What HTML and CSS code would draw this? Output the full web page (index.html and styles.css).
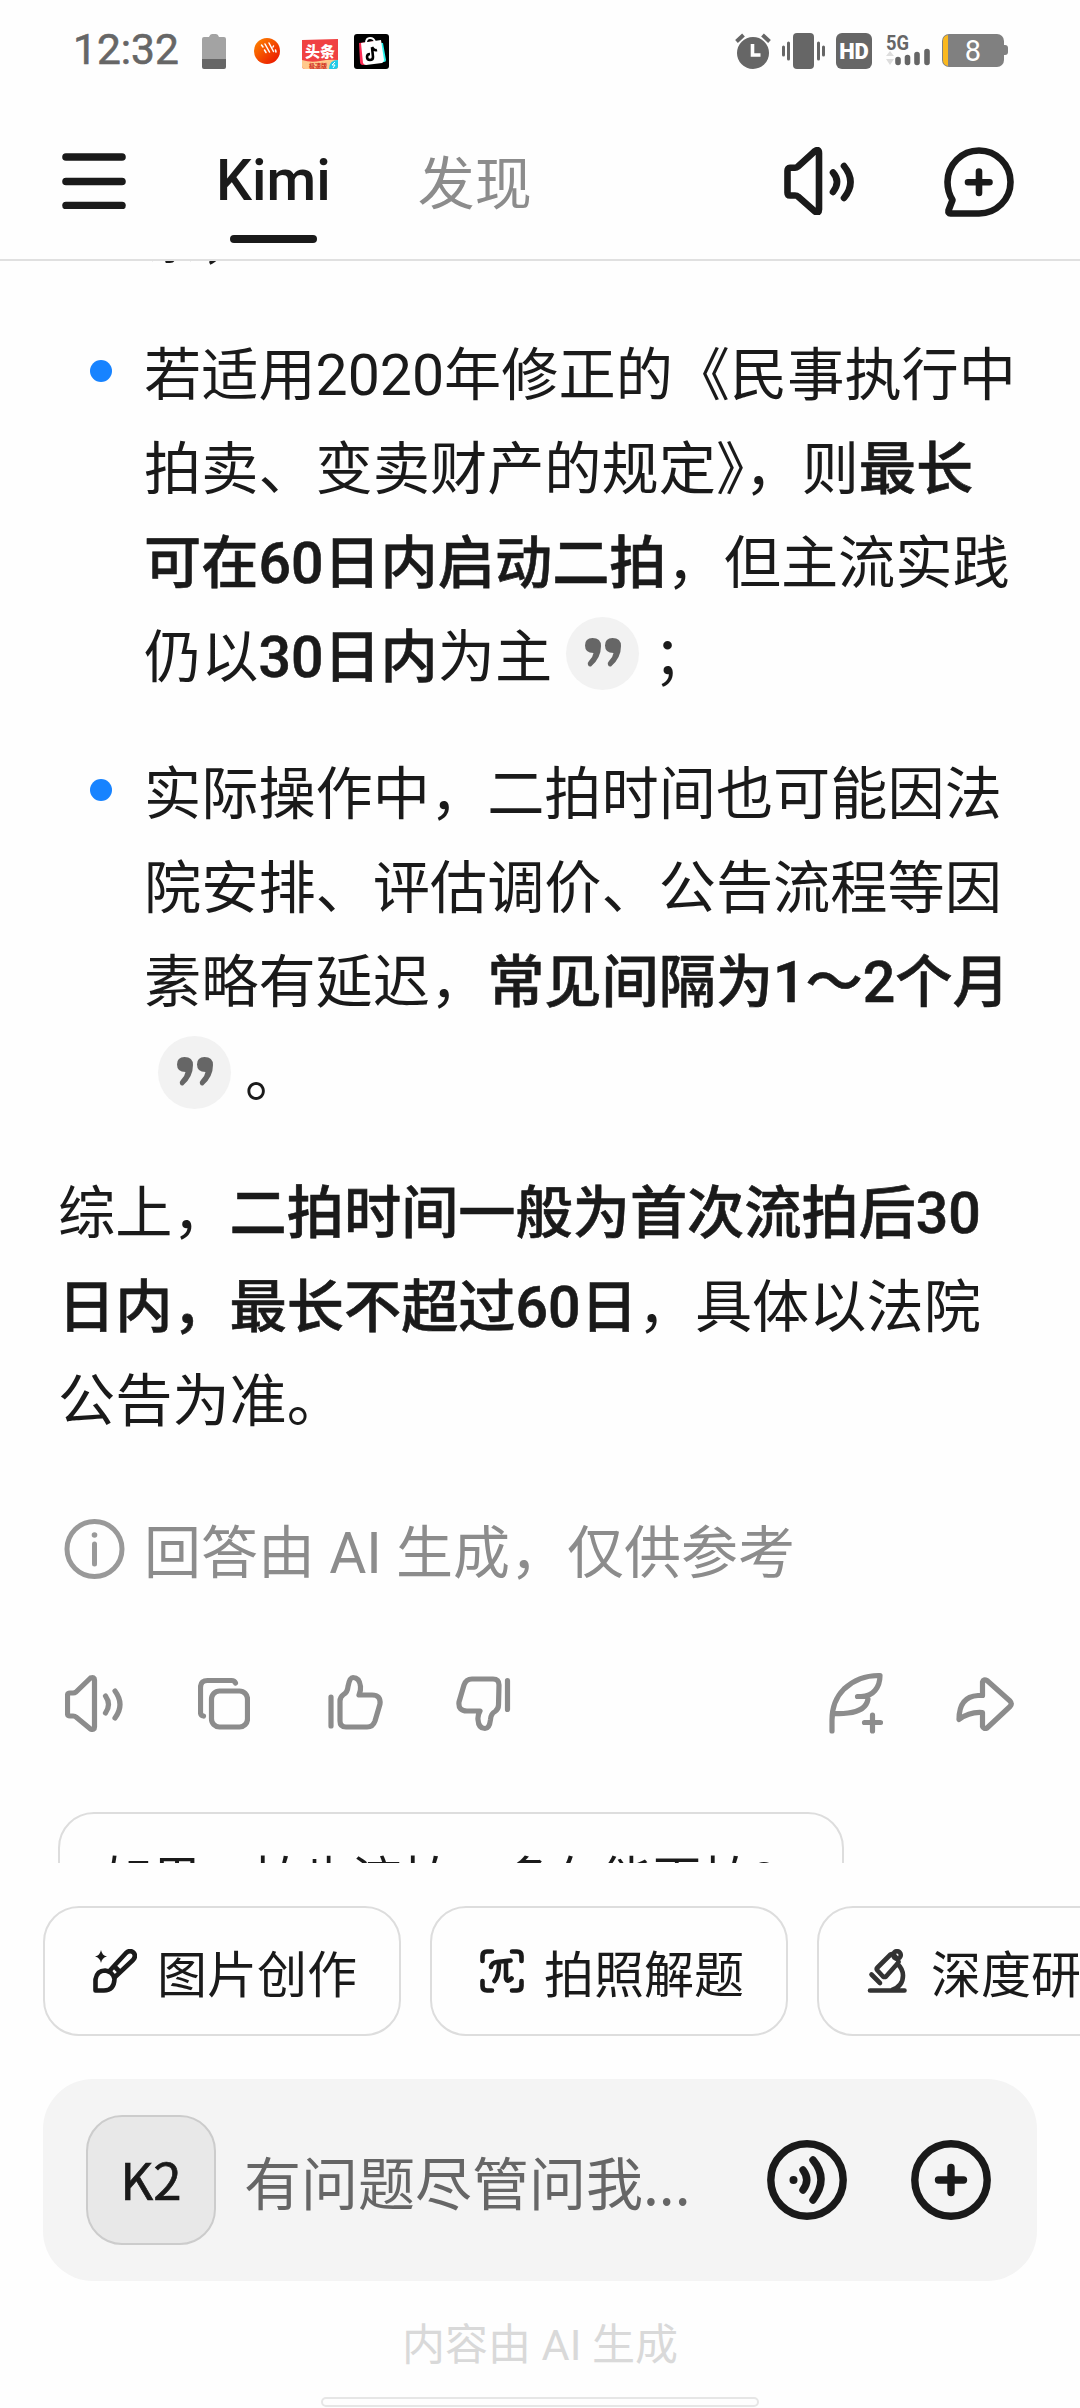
FILE: index.html
```html
<!DOCTYPE html>
<html lang="zh-CN">
<head>
    <meta charset="UTF-8">
    <meta name="viewport" content="width=device-width, initial-scale=1.0">
    <title>Kimi</title>
    <link rel="stylesheet" href="styles.css">
</head>
<body>
    <div class="status-bar">
        <span class="time">12:32</span>
        <svg class="app-battery" width="24" height="35" viewBox="0 0 24 35">
            <path d="M2 3h5q1-3 3-3h4q2 0 3 3h5q2 0 2 2v20H0V5q0-2 2-2z" fill="#a3a3a3"/>
            <path d="M0 25h24v8q0 2-2 2H2q-2 0-2-2z" fill="#666"/>
        </svg>
        <svg class="app-orange" width="26" height="26" viewBox="0 0 26 26">
            <defs>
                <linearGradient id="orange" x1="0" y1="0" x2="1" y2="1">
                    <stop offset="0" stop-color="#ff8a00"/>
                    <stop offset="1" stop-color="#e80c00"/>
                </linearGradient>
            </defs>
            <circle cx="13" cy="13" r="13" fill="url(#orange)"/>
            <path d="M7.500 7l1.500 2M11 6l4.500 8M10.500 12l1.500 2.500M15 5l4.500 8.500M19.500 8l-.5 1M21.500 12l.5 2" stroke="#fff" stroke-width="1.500" stroke-linecap="round" fill="none"/>
        </svg>
        <svg class="app-news" width="36" height="30" viewBox="0 0 36 30">
            <path d="M0 1L36 0v27q0 3-3 3H3q-3 0-3-3z" fill="#f04142"/>
            <path d="M0 21q9 3 18 1t18-1v6q0 3-3 3H3q-3 0-3-3z" fill="#ffc98c"/>
            <text x="18" y="17.500" font-size="15" font-weight="900" fill="#fff" text-anchor="middle">头条</text>
            <text x="16" y="29" font-size="6" font-weight="900" fill="#d33a2c" text-anchor="middle">极速版</text>
            <path d="M27 30q0-9 9-9v6q0 3-3 3z" fill="#22cbe8"/>
            <path d="M33 23l-3 3h3l-2 3" stroke="#fff" fill="none"/>
        </svg>
        <svg class="app-shop" width="35" height="35" viewBox="0 0 35 35">
            <rect width="35" height="35" rx="3" fill="#000"/>
            <path d="M5 9l18-2 3 21-17 3q-3 0-3-3z" fill="#fe2c55"/>
            <path d="M12 8l17 1 3 17q0 2-2 2l-18 2z" fill="#25f4ee"/>
            <path d="M7 9l20-3 3 20q0 2-2 3l-16 2q-2 0-3-2z" fill="#fff"/>
            <path d="M12 9q0-5 4-5t5 4" stroke="#fff" stroke-width="2" fill="none"/>
            <path d="M18 13l1 10q0 3-3 3t-3-3q0-3 3-3M18 13q2 4 5 3" stroke="#000" stroke-width="2.6" fill="none"/>
        </svg>
        <div class="status-icons">
            <svg width="36" height="36" viewBox="0 0 36 36">
                <circle cx="18" cy="20" r="16" fill="#666"/>
                <path d="M1.500 8.500l7-6.500M34.500 8.500l-7-6.500" stroke="#666" stroke-width="4"/>
                <path d="M17.500 11v11h8" stroke="#fff" stroke-width="3.600" fill="none"/>
            </svg>
            <svg width="43" height="36" viewBox="0 0 43 36">
                <rect x="11" width="21" height="36" rx="4" fill="#666"/>
                <path d="M1.500 14v8M6.500 10v16M36.500 10v16M41.500 14v8" stroke="#666" stroke-width="3" stroke-linecap="round"/>
            </svg>
            <svg width="36" height="36" viewBox="0 0 36 36">
                <rect width="36" height="36" rx="6" fill="#666"/>
                <text class="hd" x="18" y="26" text-anchor="middle">HD</text>
            </svg>
            <svg class="signal" width="45" height="36" viewBox="0 0 45 36">
                <text class="five-g" x="0" y="17" textLength="23" lengthAdjust="spacingAndGlyphs">5G</text>
                <path d="M0 23l4-5 4 5zM0 26h8l-4 6z" fill="#ddd"/>
                <path d="M12 26.500v3M21.500 24.500v5M31 21.500v8M41 18.500v11" stroke="#666" stroke-width="5.600" stroke-linecap="round"/>
            </svg>
            <svg class="battery" width="66" height="34" viewBox="0 0 66 34">
                <rect y="1" width="62" height="33" rx="7" fill="#808080"/>
                <path d="M61 12h2q3 0 3 3v4q0 3-3 3h-2z" fill="#808080"/>
                <path d="M6 2v31q-5-1-5-6V8q0-5 5-6z" fill="#fab81e"/>
                <text x="31" y="28" text-anchor="middle">8</text>
            </svg>
        </div>
    </div>

    <header class="top-nav">
        <svg class="menu" width="64" height="56" viewBox="0 0 64 56" stroke="#1a1a1a" stroke-width="7.600" stroke-linecap="round">
            <path d="M4 4h56M4 28.500h56M4 52.500h56"/>
        </svg>
        <div class="tab active">Kimi</div>
        <div class="tab">发现</div>
        <svg class="icon speaker" width="71" height="68" viewBox="0 0 71 68">
            <path d="M6 20.800q-2.500 0-2.500 3v22q0 2.700 2.500 2.700h5q2 0 3 1L31 64.500q4 2.500 4-2V6q0-4.500-4-2L14 19.500q-1.500 1.300-3 1.300z"/>
            <path d="M49 25.500q8 9 0 19.500M60 19q13 16 0 32"/>
        </svg>
        <svg class="icon new-chat" width="70" height="70" viewBox="0 0 70 70">
            <path d="M35 66.500H6.500q-2.500 0-2-3l4-10.500Q3.500 45 3.500 35A31.500 31.500 0 1 1 35 66.500z"/>
            <path d="M35 24.500v21.500M24 35.200h21.500"/>
        </svg>
    </header>

    <main class="chat">
        <ul class="answer-list">
            <li>条，</li>
            <li>若适用2020年修正的《民事执行中<br>拍卖、变卖财产的规定》，则<b>最长<br>可在60日内启动二拍</b>，但主流实践<br>仍以<b>30日内</b>为主<span class="cite"><svg width="36" height="29" viewBox="0 0 36 29"><path d="M16 8q0 12-10 20.500-2 .5-3-1.500-1-2 1-4 4-4 4.500-8Q0 15 0 7.500 0 0 7.500 0 16 0 16 8zM36 8q0 12-10 20.500-2 .5-3-1.500-1-2 1-4 4-4 4.500-8Q20 15 20 7.500 20 0 27.500 0 36 0 36 8z"/></svg></span>；</li>
            <li>实际操作中，二拍时间也可能因法<br>院安排、评估调价、公告流程等因<br>素略有延迟，<b>常见间隔为1～2个月</b><br><span class="cite"><svg width="36" height="29" viewBox="0 0 36 29"><path d="M16 8q0 12-10 20.500-2 .5-3-1.500-1-2 1-4 4-4 4.500-8Q0 15 0 7.500 0 0 7.500 0 16 0 16 8zM36 8q0 12-10 20.500-2 .5-3-1.500-1-2 1-4 4-4 4.500-8Q20 15 20 7.500 20 0 27.500 0 36 0 36 8z"/></svg></span>。</li>
        </ul>
        <p class="summary">综上，<b>二拍时间一般为首次流拍后30<br>日内，最长不超过60日</b>，具体以法院<br>公告为准。</p>
        <div class="notice">
            <svg width="61" height="60" viewBox="0 0 61 60" fill="none" stroke="#999">
                <circle cx="30.500" cy="30" r="27.500" stroke-width="5"/>
                <path d="M30.500 25v20" stroke-width="5" stroke-linecap="round"/>
                <circle cx="30.500" cy="16" r="2.800" fill="#999" stroke="none"/>
            </svg>
            <span>回答由 AI 生成，仅供参考</span>
        </div>
        <div class="actions">
            <svg width="60" height="60" viewBox="65 1674 60 60">
                <path d="M70 1694q-2.500 0-2.500 2.500v18q0 2.500 2.500 2.500h3q2 0 3 1l14.500 12q4 1.500 4-2v-47q0-3.500-4-2L76 1693q-1.300 1-3 1z"/>
                <path d="M105.500 1697q6 8.500 0 17M115 1692q10 13.500 0 27"/>
            </svg>
            <svg width="52" height="60" viewBox="198 1674 52 60">
                <rect x="211.500" y="1692" width="36" height="36" rx="8"/>
                <path d="M235.500 1684q-1-2.500-4-2.500h-24q-7 0-7 7v25q0 3 3 3.500"/>
            </svg>
            <svg class="like" width="56" height="60" viewBox="328 1674 56 60">
                <path d="M331 1698v29M340 1702q0-4 3.500-6.500 4-2 4.500-8 1.500-9 5-9 6.500 0 7.500 9 .5 4-1.500 8.500h13q9 0 8 9l-5 17q-2 6-8 6h-21q-6 0-6-6z"/>
            </svg>
            <svg class="dislike" width="56" height="60" viewBox="456 1674 56 60">
                <path d="M507.500 1681.500v29M498.500 1706q0 4-3.500 6.500-4 2-4.500 8-1 9-5.500 9-6.500 0-7-9-.5-4 2-8.500h-13q-9 0-8-9l5-17q2-6 8-6h21q6 0 6 6z"/>
            </svg>
            <svg class="feather" width="54" height="62" viewBox="829 1673 54 62">
                <path d="M832 1732v-11q0-19 12-31 15-14 36-13.500 0 9-5 15t-14 6h-3.500M868 1700q-2 12-20 14-7 1-13 .500M872.500 1716v16M864.500 1723.500h16"/>
            </svg>
            <svg width="60" height="60" viewBox="957 1674 60 60">
                <path d="M983.500 1696.500v-13.500q1-3.500 4.500-1.500l23 20.500q2.500 2.700 0 5.500l-23 21.500q-3.500 1.500-4.500-1.500v-14q-13-1-23.500 7 0-23 19-24z"/>
            </svg>
        </div>
        <div class="suggestion">如果二拍也流拍，多久能再拍?</div>
    </main>

    <footer class="composer">
        <div class="chips">
            <div class="chip">
                <svg width="44" height="44" viewBox="0 0 44 44">
                    <path d="M2.500 41.500V30.500Q4 21.500 12 21.500 20 22.500 21.500 30 21 41.500 11 41.500z"/>
                    <path d="M16 22.500l17-18.500q4-3.500 7.500-.5 3 3.500-.5 7.500L22 28M22 18l5 5"/>
                    <path d="M8 1q1 5.500 6 6.500-5 1-6 6.500-1-5.500-6-6.500 5-1 6-6.500z" fill="#1a1a1a" stroke="none"/>
                </svg>
                <span>图片创作</span>
            </div>
            <div class="chip">
                <svg width="44" height="44" viewBox="0 0 44 44">
                    <path d="M2.500 12V7q0-4.500 4.500-4.500h5M32 2.500h5q4.500 0 4.500 4.500v5M41.500 32v5q0 4.500-4.500 4.500h-5M12 41.500H7q-4.500 0-4.500-4.500v-5"/>
                    <path d="M11 18q1-4.500 6-5l13.500-1.500M19 14q0 13-4.500 18M26 13v16q1 5 5.500.5"/>
                </svg>
                <span>拍照解题</span>
            </div>
            <div class="chip">
                <svg class="scope" width="44" height="44" viewBox="0 0 44 44">
                    <path d="M3 41.500h34.500M25 41Q36 37 36 26.500 36 20 30.500 15M4.500 25.500l8.500 8.500"/>
                    <path d="M10.500 18.500l13-13q1.500-1 3 0l4.500 5.500q1 1.500 0 3l-12 13.500q-1.500 1-3 0l-5.500-6q-1.500-1.500 0-3z"/>
                    <circle cx="30" cy="6" r="3.800"/>
                </svg>
                <span>深度研究</span>
            </div>
        </div>
        <div class="input-bar">
            <div class="model">K2</div>
            <div class="placeholder">有问题尽管问我...</div>
            <svg class="icon voice" width="80" height="80" viewBox="0 0 80 80">
                <circle cx="40" cy="40" r="36.200"/>
                <circle cx="26.500" cy="40" r="4" fill="#1a1a1a" stroke="none"/>
                <path d="M36 30q7.500 10 0 20M46 20q16 19 0 40"/>
            </svg>
            <svg class="icon" width="80" height="80" viewBox="0 0 80 80">
                <circle cx="40" cy="40" r="36.200"/>
                <path d="M40 27.500v25M27.500 40h25"/>
            </svg>
        </div>
        <div class="footnote">内容由 AI 生成</div>
        <div class="home-bar"></div>
    </footer>
</body>
</html>
```
FILE: styles.css
```css
* {
    box-sizing: border-box;
    margin: 0;
    padding: 0;
}
body {
    width: 1080px;
    height: 2408px;
    overflow: hidden;
    display: flex;
    flex-direction: column;
    background-color: #fefefe;
    color: #1a1a1a;
    font-family: Roboto, "Noto Sans CJK SC", sans-serif;
    white-space: nowrap;
}
svg {
    flex-shrink: 0;
    display: block;
}

/* status bar */
.status-bar {
    height: 102px;
    display: flex;
    align-items: center;
    padding-left: 73px;
    padding-right: 72px;
}
.time {
    width: 129px;
    font-size: 42.5px;
    line-height: 46px;
    margin-top: -2px;
    color: #666;
    -webkit-text-stroke: 0.6px #666;
}
.app-orange {
    margin-left: 28px;
}
.app-news {
    margin-left: 22px;
    margin-top: 5px;
    font-family: "Noto Sans CJK SC", sans-serif;
}
.app-shop {
    margin-left: 16px;
}
.status-icons {
    display: flex;
    margin-left: auto;
    gap: 11px;
}
.hd {
    font-size: 22px;
    font-weight: 900;
    fill: #fff;
}
.signal {
    margin-left: 3px;
}
.five-g {
    font-size: 20px;
    font-weight: 700;
    fill: #666;
}
.battery text {
    font-size: 29px;
    fill: #fff;
}

/* header */
.top-nav {
    height: 159px;
    flex-shrink: 0;
    display: flex;
    align-items: center;
    padding: 0 66px 0 62px;
    border-bottom: 2px solid #e0e0e0;
}
.menu {
    margin-top: 1px;
}
.tab {
    height: 157px;
    margin-left: 87px;
    font-size: 57px;
    line-height: 166px;
    color: #8c8c8c;
}
.tab.active {
    position: relative;
    margin-left: 90px;
    line-height: 157px;
    font-weight: 500;
    color: #1a1a1a;
}
.tab.active::after {
    content: "";
    position: absolute;
    left: 50%;
    bottom: 16px;
    width: 87px;
    height: 8px;
    margin-left: -43px;
    border-radius: 4px;
    background-color: #1a1a1a;
}
.icon {
    fill: none;
    stroke: #1a1a1a;
    stroke-width: 6.6;
    stroke-linecap: round;
    stroke-linejoin: round;
}
.speaker {
    margin-left: auto;
}
.new-chat {
    margin-left: 89px;
    margin-top: 3px;
}

/* conversation */
.chat {
    height: 1602px;
    flex-shrink: 0;
    overflow: hidden;
    padding: 0 58px;
    font-size: 57.2px;
    line-height: 94px;
}
.answer-list {
    list-style: none;
    margin-top: -69px;
}
.answer-list li {
    position: relative;
    padding-left: 86px;
    margin-bottom: 43px;
}
.answer-list li::before {
    content: "";
    position: absolute;
    left: 32px;
    top: 31px;
    width: 22px;
    height: 22px;
    border-radius: 50%;
    background-color: #1783ff;
}
b {
    font-weight: 500;
    -webkit-text-stroke: 0.6px #1a1a1a;
}
.cite {
    display: inline-flex;
    align-items: center;
    justify-content: center;
    width: 73px;
    height: 73px;
    margin: 0 14px;
    vertical-align: 10px;
    line-height: 1;
    border-radius: 50%;
    background-color: #f2f2f2;
    fill: #666;
}
.cite svg {
    margin-top: -2px;
}
.summary {
    margin-bottom: 58px;
}
.notice {
    display: flex;
    align-items: center;
    gap: 19px;
    padding-left: 6px;
    font-size: 57px;
    color: #8c8c8c;
}
.notice svg {
    margin-top: -11px;
}
.actions {
    display: flex;
    align-items: center;
    margin-top: 71px;
    padding-left: 7px;
    padding-right: 6px;
    gap: 73px;
    height: 62px;
    fill: none;
    stroke: #8c8c8c;
    stroke-width: 5.2;
    stroke-linecap: round;
    stroke-linejoin: round;
}
.like {
    margin-left: 5px;
}
.dislike {
    margin-left: -1px;
}
.feather {
    margin-left: auto;
}
.suggestion {
    width: 786px;
    height: 130px;
    margin-top: 78px;
    padding: 0 42px;
    border: 2px solid #ddd;
    border-radius: 36px;
    font-size: 50px;
    line-height: 134px;
}

/* bottom area */
.composer {
    flex: 1;
    padding: 43px 43px 0;
}
.chips {
    display: flex;
    gap: 29px;
}
.chip {
    width: 358px;
    height: 130px;
    flex-shrink: 0;
    display: flex;
    align-items: center;
    gap: 20px;
    padding-left: 48px;
    border: 2px solid #ddd;
    border-radius: 36px;
    font-size: 50px;
}
.chip svg {
    fill: none;
    stroke: #1a1a1a;
    stroke-width: 4.6;
    stroke-linecap: round;
    stroke-linejoin: round;
}
.chip .scope {
    stroke: #333;
}
.input-bar {
    width: 994px;
    height: 202px;
    margin-top: 43px;
    padding: 0 46px 0 43px;
    display: flex;
    align-items: center;
    border-radius: 50px;
    background-color: #f4f4f4;
}
.input-bar .icon {
    stroke-width: 7.4;
}
.model {
    width: 130px;
    height: 130px;
    border: 2px solid #ccc;
    border-radius: 36px;
    background-color: #e8e8e8;
    font-family: "Noto Sans CJK SC", sans-serif;
    font-size: 51px;
    line-height: 123px;
    text-align: center;
    -webkit-text-stroke: 0.7px #1a1a1a;
}
.placeholder {
    margin-left: 28px;
    font-family: "Noto Sans CJK SC", sans-serif;
    font-size: 57px;
    color: #666;
}
.voice {
    margin-left: auto;
    margin-right: 64px;
}
.footnote {
    margin-top: 33px;
    font-size: 43px;
    line-height: 62px;
    text-align: center;
    color: #d9d9d9;
}
.home-bar {
    width: 438px;
    height: 10px;
    margin: 21px auto 0;
    border: 2px solid #e6e6e6;
    border-radius: 5px;
}
```
